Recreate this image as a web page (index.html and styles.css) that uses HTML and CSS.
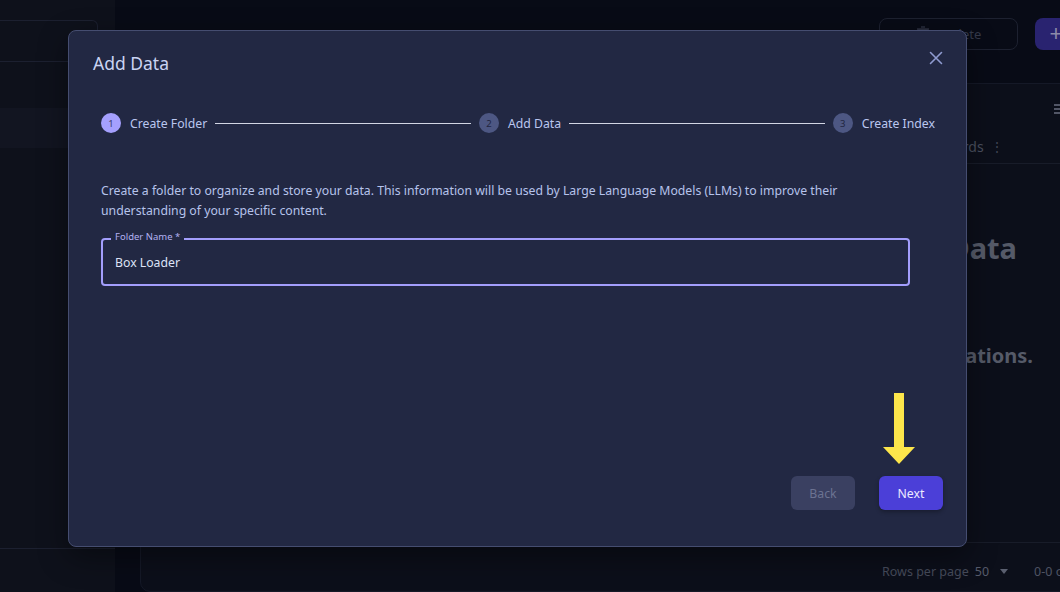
FILE: index.html
```html
<!DOCTYPE html>
<html lang="en">
<head>
  <meta charset="UTF-8">
  <title>Data Sources</title>
  <meta name="viewport" content="width=device-width, initial-scale=1.0">
  <link rel="stylesheet" href="styles.css">
</head>
<body>

  <div class="app">

    <!-- Sidebar -->
    <aside class="sidebar">
      <div class="side-search"></div>
      <div class="side-gap"></div>
      <div class="side-item"></div>
      <div class="side-fill"></div>
      <div class="side-bottom"></div>
    </aside>

    <!-- Main area -->
    <main class="main">
      <div class="toolbar">
        <button class="btn-outline">
          <svg width="14" height="16" viewBox="0 0 14 16"><path d="M2 4h10l-1 11H3z M1 3h12 M5 1h4" fill="#2a2f3f" stroke="#2a2f3f" stroke-width="1.4"/></svg>
          Delete
        </button>
        <button class="btn-add">+</button>
      </div>

      <div class="table-card">
        <div class="table-top">
          <svg class="cols-icon" width="12" height="12" viewBox="0 0 12 12">
            <path d="M0 2h12M0 6h12M0 10h12" stroke="#6a6f80" stroke-width="1.6"/>
          </svg>
        </div>
        <div class="table-head">
          <span class="col">Name</span>
          <span class="col">Type</span>
          <span class="col col-last">Records<span class="dots">&#8942;</span></span>
        </div>
        <div class="table-body">
          <div class="empty">
            <div class="empty-title">No Data</div>
            <div class="empty-sub">Add data sources to start building integrations.</div>
          </div>
        </div>
        <div class="table-foot">
          <span>Rows per page</span>
          <span class="rows-val">50</span>
          <span class="caret"></span>
          <span class="range">0-0 of 0</span>
        </div>
      </div>
    </main>

  </div>

  <!-- Add Data dialog -->
  <div class="modal">
    <div class="modal-head">
      <h2>Add Data</h2>
      <svg class="close" width="14" height="14" viewBox="0 0 14 14">
        <path d="M1.5 1.5l11 11M12.5 1.5l-11 11" stroke="#8f9bd0" stroke-width="1.6" stroke-linecap="round"/>
      </svg>
    </div>

    <div class="modal-body">
      <div class="stepper">
        <div class="step active"><span class="num">1</span>Create Folder</div>
        <div class="step-line"></div>
        <div class="step"><span class="num">2</span>Add Data</div>
        <div class="step-line"></div>
        <div class="step"><span class="num">3</span>Create Index</div>
      </div>

      <p class="intro">Create a folder to organize and store your data. This information will be used by Large Language Models (LLMs) to improve their understanding of your specific content.</p>

      <div class="field">
        <label>Folder Name *</label>
        <input type="text" value="Box Loader">
      </div>
    </div>

    <div class="modal-foot">
      <button class="btn-back">Back</button>
      <button class="btn-next">Next</button>
    </div>

    <svg class="pointer" width="34" height="72" viewBox="0 0 34 72">
      <path d="M12 0h10v54h11L17 71 1 54h11z" fill="#fde64b"/>
    </svg>
  </div>

</body>
</html>
```

FILE: styles.css
```css
body {
  margin: 0;
  font-family: 'Noto Sans', 'Open Sans', sans-serif;
  background: #080b16;
  overflow: hidden;
}

.app {
  display: flex;
  height: 592px;
}

/* sidebar */
.sidebar {
  width: 115px;
  background: #0e111b;
  display: flex;
  flex-direction: column;
}

.side-search {
  margin-top: 20px;
  width: 98px;
  height: 42px;
  box-sizing: border-box;
  border: 1px solid #1c2030;
  border-left: none;
  border-radius: 0 6px 0 0;
}

.side-gap {
  height: 46px;
}

.side-item {
  height: 40px;
  background: #121521;
}

.side-fill {
  flex: 1;
}

.side-bottom {
  height: 43px;
  border-top: 1px solid #1c2030;
}

/* main */
.main {
  flex: 1;
  padding: 18px 0 0 25px;
  display: flex;
  flex-direction: column;
  min-width: 0;
}

.toolbar {
  display: flex;
  justify-content: flex-end;
  gap: 17px;
  margin-right: -17px;
}

.btn-outline {
  width: 139px;
  height: 32px;
  border: 1px solid #1d2130;
  border-radius: 8px;
  background: transparent;
  color: #353a4a;
  font-family: inherit;
  font-size: 13px;
  display: flex;
  align-items: center;
  justify-content: center;
  gap: 12px;
}

.btn-add {
  width: 42px;
  height: 32px;
  border: none;
  border-radius: 8px;
  background: #292370;
  color: #8c8aa8;
  font-size: 22px;
  line-height: 1;
}

.table-card {
  margin-top: 33px;
  margin-right: -40px;
  flex: 1;
  background: #0c0f1a;
  border: 1px solid #151927;
  border-radius: 10px 10px 0 10px;
  display: flex;
  flex-direction: column;
}

.table-top {
  height: 46px;
  box-sizing: border-box;
  padding: 3px 33px 0 0;
  display: flex;
  justify-content: flex-end;
  align-items: center;
}

.table-head {
  height: 33px;
  display: flex;
  align-items: center;
  border-bottom: 1px solid #181c29;
  color: #4a4f5f;
  font-size: 14px;
  padding-left: 20px;
}

.col {
  width: 280px;
}

.col-last {
  width: auto;
  margin-left: 210px;
}

.dots {
  margin-left: 6px;
  color: #3f4453;
}

.table-body {
  flex: 1;
  border-bottom: 1px solid #181c29;
}

.empty {
  width: 600px;
  margin-left: 292px;
  display: flex;
  flex-direction: column;
  align-items: flex-end;
  font-weight: 700;
  color: #555a68;
}

.empty-title {
  font-size: 29px;
  line-height: 40px;
  margin-top: 64px;
  padding-right: 16px;
}

.empty-sub {
  font-size: 20px;
  margin-top: 74px;
}

.table-foot {
  height: 48px;
  box-sizing: border-box;
  padding: 8px 0 0 741px;
  display: flex;
  align-items: center;
  color: #464b5b;
  font-size: 12.5px;
}

.rows-val {
  margin-left: 6px;
  color: #565b6b;
}

.caret {
  margin-left: 11px;
  border-left: 4px solid transparent;
  border-right: 4px solid transparent;
  border-top: 5px solid #5a5f6f;
}

.range {
  margin-left: 26px;
  color: #4e5363;
}

/* dialog */
.modal {
  position: absolute;
  left: 68px;
  top: 30px;
  width: 899px;
  height: 517px;
  box-sizing: border-box;
  background: #222843;
  border: 1px solid #454d70;
  border-radius: 8px;
  box-shadow: 0 10px 30px rgba(0,0,0,0.4);
  display: flex;
  flex-direction: column;
}

.modal-head {
  display: flex;
  justify-content: space-between;
  align-items: center;
  padding: 19px 24px 20px 24px;
}

.modal-head h2 {
  margin: 0;
  font-size: 17.5px;
  font-weight: 400;
  line-height: 26px;
  color: #cad4f3;
}

.close {
  margin-top: -10px;
  margin-right: -1px;
}

.modal-body {
  flex: 1;
  padding: 0 31px 0 32px;
}

.stepper {
  display: flex;
  align-items: center;
  margin-top: 15px;
  height: 24px;
}

.step {
  display: flex;
  align-items: center;
  gap: 9px;
  font-size: 12.25px;
  color: #bac6ef;
}

.num {
  width: 20px;
  height: 20px;
  border-radius: 50%;
  background: #4d5783;
  color: #1f2540;
  font-size: 9.5px;
  display: flex;
  align-items: center;
  justify-content: center;
}

.step.active .num {
  background: #a5a0fe;
  color: #3b3f6e;
}

.step-line {
  flex: 1;
  height: 1px;
  background: #d2d6e4;
  margin: 0 8px;
}

.intro {
  margin: 46px 0 0 0;
  font-size: 12.25px;
  line-height: 20px;
  color: #b6c3eb;
  max-width: 790px;
}

.field {
  position: relative;
  margin-top: 17px;
  width: 809px;
}

.field label {
  position: absolute;
  left: 10px;
  top: -7px;
  padding: 0 4px;
  background: #222843;
  font-size: 9.5px;
  line-height: 12px;
  color: #b3b1f2;
}

.field input {
  width: 100%;
  height: 48px;
  box-sizing: border-box;
  border: 2px solid #a39efc;
  border-radius: 4px;
  background: transparent;
  padding: 0 12px;
  font-family: inherit;
  font-size: 12.25px;
  color: #dde3f6;
  outline: none;
}

.modal-foot {
  display: flex;
  justify-content: flex-end;
  gap: 24px;
  padding: 0 23px 36px 0;
}

.modal-foot button {
  width: 64px;
  height: 34px;
  border: none;
  border-radius: 6px;
  font-family: inherit;
  font-size: 12.25px;
}

.btn-back {
  background: #3a4061;
  color: #6c7392;
}

.btn-next {
  background: #4b3fd8;
  color: #eceaff;
  box-shadow: 0 2px 4px rgba(0,0,0,0.3);
}

.pointer {
  position: absolute;
  left: 813px;
  top: 362px;
}
```
